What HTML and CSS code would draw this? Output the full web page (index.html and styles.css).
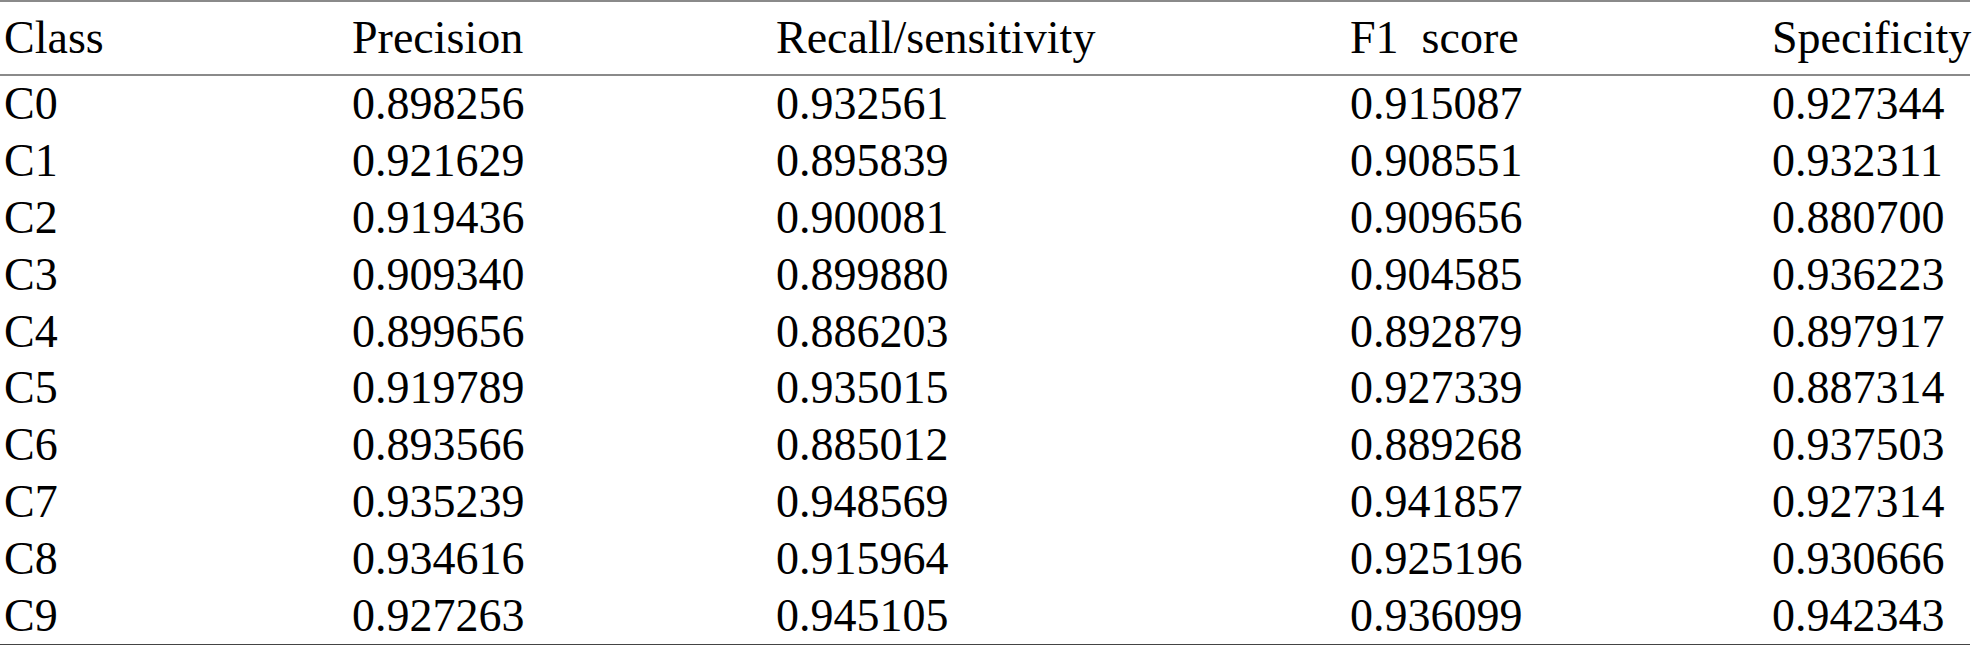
FILE: index.html
```html
<!DOCTYPE html>
<html>
<head>
<meta charset="utf-8">
<link rel="stylesheet" href="styles.css">
</head>
<body>
<table class="metrics">
  <colgroup>
    <col class="c-class">
    <col class="c-prec">
    <col class="c-rec">
    <col class="c-f1">
    <col class="c-spec">
  </colgroup>
  <thead>
    <tr><th>Class</th><th>Precision</th><th>Recall/sensitivity</th><th>F1&nbsp; score</th><th>Specificity</th></tr>
  </thead>
  <tbody>
    <tr><td>C0</td><td>0.898256</td><td>0.932561</td><td>0.915087</td><td>0.927344</td></tr>
    <tr><td>C1</td><td>0.921629</td><td>0.895839</td><td>0.908551</td><td>0.932311</td></tr>
    <tr><td>C2</td><td>0.919436</td><td>0.900081</td><td>0.909656</td><td>0.880700</td></tr>
    <tr><td>C3</td><td>0.909340</td><td>0.899880</td><td>0.904585</td><td>0.936223</td></tr>
    <tr><td>C4</td><td>0.899656</td><td>0.886203</td><td>0.892879</td><td>0.897917</td></tr>
    <tr><td>C5</td><td>0.919789</td><td>0.935015</td><td>0.927339</td><td>0.887314</td></tr>
    <tr><td>C6</td><td>0.893566</td><td>0.885012</td><td>0.889268</td><td>0.937503</td></tr>
    <tr><td>C7</td><td>0.935239</td><td>0.948569</td><td>0.941857</td><td>0.927314</td></tr>
    <tr><td>C8</td><td>0.934616</td><td>0.915964</td><td>0.925196</td><td>0.930666</td></tr>
    <tr><td>C9</td><td>0.927263</td><td>0.945105</td><td>0.936099</td><td>0.942343</td></tr>
  </tbody>
</table>
</body>
</html>
```
FILE: styles.css
```css
html, body {
  margin: 0;
  padding: 0;
  background: #ffffff;
}

.metrics {
  width: 1970px;
  border-collapse: collapse;
  table-layout: fixed;
  font-family: "Liberation Serif", "Times New Roman", serif;
  font-size: 46px;
  color: #000000;
  border-top: 2px solid #8a8a8a;
  border-bottom: 2px solid #444444;
}

.c-class { width: 352px; }
.c-prec { width: 424px; }
.c-rec { width: 574px; }
.c-f1 { width: 422px; }
.c-spec { width: auto; }

.metrics th,
.metrics td {
  text-align: left;
  font-weight: normal;
  padding: 0 0 0 4px;
  white-space: nowrap;
  line-height: 1;
}

.metrics th {
  height: 72px;
  border-bottom: 2px solid #8a8a8a;
  vertical-align: middle;
}

.metrics td {
  height: 56.8px;
  vertical-align: middle;
}

.metrics td + td,
.metrics th + th {
  padding-left: 0;
}
```
